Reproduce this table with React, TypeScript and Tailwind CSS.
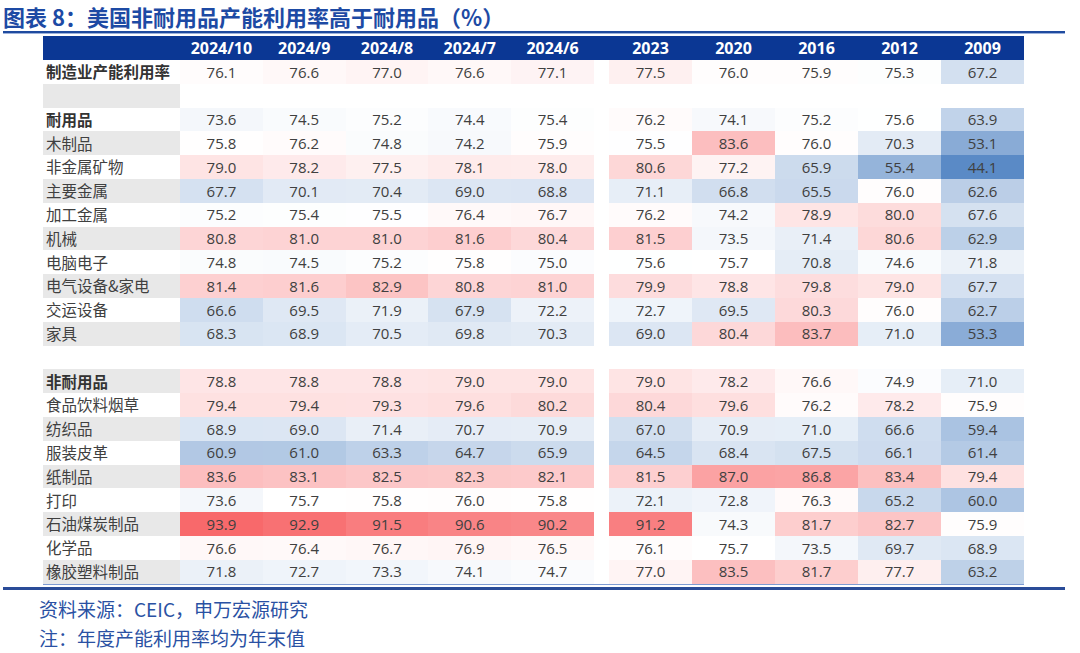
import React from "react";

type Row = { label: string; bold?: boolean; values: number[] | null };

const rows: Row[] = [
  { label: "制造业产能利用率", bold: true, values: [76.1, 76.6, 77.0, 76.6, 77.1, 77.5, 76.0, 75.9, 75.3, 67.2] },
  { label: "", values: null },
  { label: "耐用品", bold: true, values: [73.6, 74.5, 75.2, 74.4, 75.4, 76.2, 74.1, 75.2, 75.6, 63.9] },
  { label: "木制品", values: [75.8, 76.2, 74.8, 74.2, 75.9, 75.5, 83.6, 76.0, 70.3, 53.1] },
  { label: "非金属矿物", values: [79.0, 78.2, 77.5, 78.1, 78.0, 80.6, 77.2, 65.9, 55.4, 44.1] },
  { label: "主要金属", values: [67.7, 70.1, 70.4, 69.0, 68.8, 71.1, 66.8, 65.5, 76.0, 62.6] },
  { label: "加工金属", values: [75.2, 75.4, 75.5, 76.4, 76.7, 76.2, 74.2, 78.9, 80.0, 67.6] },
  { label: "机械", values: [80.8, 81.0, 81.0, 81.6, 80.4, 81.5, 73.5, 71.4, 80.6, 62.9] },
  { label: "电脑电子", values: [74.8, 74.5, 75.2, 75.8, 75.0, 75.6, 75.7, 70.8, 74.6, 71.8] },
  { label: "电气设备&家电", values: [81.4, 81.6, 82.9, 80.8, 81.0, 79.9, 78.8, 79.8, 79.0, 67.7] },
  { label: "交运设备", values: [66.6, 69.5, 71.9, 67.9, 72.2, 72.7, 69.5, 80.3, 76.0, 62.7] },
  { label: "家具", values: [68.3, 68.9, 70.5, 69.8, 70.3, 69.0, 80.4, 83.7, 71.0, 53.3] },
  { label: "", values: null },
  { label: "非耐用品", bold: true, values: [78.8, 78.8, 78.8, 79.0, 79.0, 79.0, 78.2, 76.6, 74.9, 71.0] },
  { label: "食品饮料烟草", values: [79.4, 79.4, 79.3, 79.6, 80.2, 80.4, 79.6, 76.2, 78.2, 75.9] },
  { label: "纺织品", values: [68.9, 69.0, 71.4, 70.7, 70.9, 67.0, 70.9, 71.0, 66.6, 59.4] },
  { label: "服装皮革", values: [60.9, 61.0, 63.3, 64.7, 65.9, 64.5, 68.4, 67.5, 66.1, 61.4] },
  { label: "纸制品", values: [83.6, 83.1, 82.5, 82.3, 82.1, 81.5, 87.0, 86.8, 83.4, 79.4] },
  { label: "打印", values: [73.6, 75.7, 75.8, 76.0, 75.8, 72.1, 72.8, 76.3, 65.2, 60.0] },
  { label: "石油煤炭制品", values: [93.9, 92.9, 91.5, 90.6, 90.2, 91.2, 74.3, 81.7, 82.7, 75.9] },
  { label: "化学品", values: [76.6, 76.4, 76.7, 76.9, 76.5, 76.1, 75.7, 73.5, 69.7, 68.9] },
  { label: "橡胶塑料制品", values: [71.8, 72.7, 73.3, 74.1, 74.7, 77.0, 83.5, 81.7, 77.7, 63.2] },
];

const headers1 = ["2024/10", "2024/9", "2024/8", "2024/7", "2024/6"];
const headers2 = ["2023", "2020", "2016", "2012", "2009"];

const all: number[] = rows.flatMap((r) => r.values ?? []);
const sorted = [...all].sort((a, b) => a - b);
const minV = sorted[0];
const maxV = sorted[sorted.length - 1];
const n = sorted.length;
const mid = n % 2 === 0 ? (sorted[n / 2 - 1] + sorted[n / 2]) / 2 : sorted[(n - 1) / 2];

const lerp = (a: number, b: number, t: number) => Math.round(a + (b - a) * t);
function colorFor(v: number): string {
  const red = [248, 105, 107];
  const blue = [90, 138, 198];
  if (v >= mid) {
    const t = maxV === mid ? 0 : (v - mid) / (maxV - mid);
    return `rgb(${lerp(255, red[0], t)},${lerp(255, red[1], t)},${lerp(255, red[2], t)})`;
  }
  const t = (mid - v) / (mid - minV);
  return `rgb(${lerp(255, blue[0], t)},${lerp(255, blue[1], t)},${lerp(255, blue[2], t)})`;
}

const gridCols = "grid grid-cols-[137px_repeat(5,82.8px)_15px_repeat(5,83px)]";
const numFont = { fontFamily: '"Open Sans", "Noto Sans CJK SC", sans-serif' };

export default function App() {
  return (
    <div
      className="w-[1080px] h-[653px] bg-white overflow-hidden"
      style={{ fontFamily: '"Noto Sans CJK SC", "Open Sans", sans-serif' }}
    >
      <div className="pl-[3px] pt-[3px] h-[30px] text-[22px] leading-[27px] font-bold text-[#1d4aa4] whitespace-nowrap">
        图表 8：美国非耐用品产能利用率高于耐用品（%）
      </div>
      <div className="ml-[3px] mt-[1px] w-[1062px] h-[2px] bg-[#1f4b9f]" />
      <div className="ml-[3px] w-[1062px] h-[1px] bg-[#9db2dc]" />
      <div className="ml-[43px] mt-[2px] w-[981px]">
        <div className={`${gridCols} h-[24px] bg-[#0b3794] text-white text-[16px] font-bold`} style={numFont}>
          <div />
          {headers1.map((h) => (
            <div key={h} className="flex items-center justify-center">{h}</div>
          ))}
          <div />
          {headers2.map((h) => (
            <div key={h} className="flex items-center justify-center">{h}</div>
          ))}
        </div>
        {rows.map((r, i) => (
          <div key={i} className={`${gridCols} h-[23.8px]`}>
            <div
              className={`flex items-center pl-[3px] text-[15.5px] whitespace-nowrap ${
                i % 2 === 1 ? "bg-[#e8e8e8]" : "bg-white"
              } ${r.bold ? "font-bold text-[#333333]" : "text-[#404040]"}`}
            >
              {r.label}
            </div>
            {[0, 1, 2, 3, 4].map((k) => (
              <Cell key={k} v={r.values ? r.values[k] : null} />
            ))}
            <div className="bg-white" />
            {[5, 6, 7, 8, 9].map((k) => (
              <Cell key={k} v={r.values ? r.values[k] : null} />
            ))}
          </div>
        ))}
        <div className="h-[1.5px] bg-[#7e9bd2]" />
      </div>
      <div className="ml-[3px] mt-[2px] w-[1062px] h-[2.5px] bg-[#2a4c98]" />
      <div className="pl-[39px] mt-[4px] text-[19px] leading-[29px] text-[#2a51a3]">
        <div>资料来源：CEIC，申万宏源研究</div>
        <div>注：年度产能利用率均为年末值</div>
      </div>
    </div>
  );
}

function Cell({ v }: { v: number | null }) {
  if (v === null) return <div className="bg-white" />;
  return (
    <div
      className="flex items-center justify-center text-[15px] text-[#404040]"
      style={{ ...numFont, backgroundColor: colorFor(v) }}
    >
      {v.toFixed(1)}
    </div>
  );
}
